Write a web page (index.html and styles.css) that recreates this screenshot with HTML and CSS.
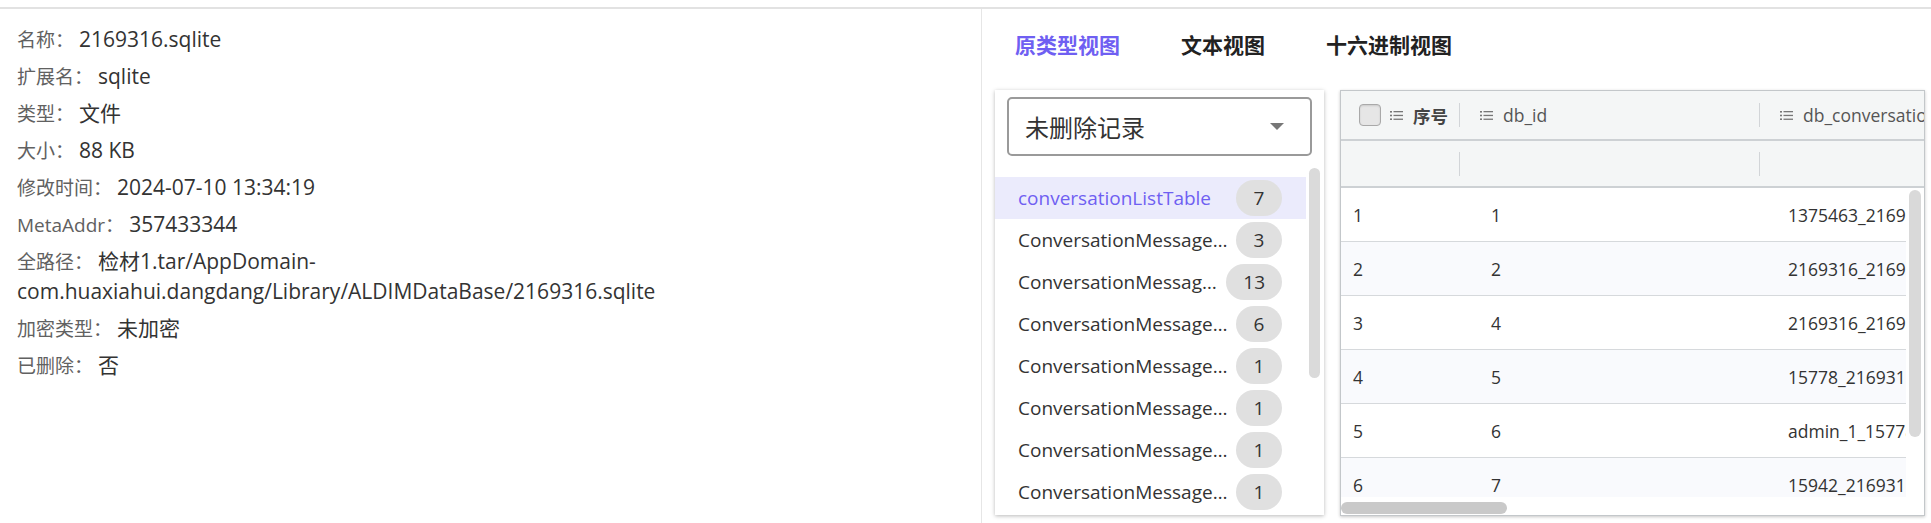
FILE: index.html
```html
<!DOCTYPE html>
<html lang="zh-CN">
<head>
<meta charset="utf-8">
<title>2169316.sqlite</title>
<link rel="stylesheet" href="styles.css">
</head>
<body>
<div class="app">
  <div class="topbar"></div>
  <div class="main">
    <section class="info">
      <div class="info-list">
        <div class="row"><span class="label">名称：</span><span class="value">2169316.sqlite</span></div>
        <div class="row"><span class="label">扩展名：</span><span class="value">sqlite</span></div>
        <div class="row"><span class="label">类型：</span><span class="value">文件</span></div>
        <div class="row"><span class="label">大小：</span><span class="value">88 KB</span></div>
        <div class="row"><span class="label">修改时间：</span><span class="value">2024-07-10 13:34:19</span></div>
        <div class="row"><span class="label">MetaAddr：</span><span class="value">357433344</span></div>
        <div class="row"><span class="label">全路径：</span><span class="value">检材1.tar/AppDomain-com.huaxiahui.dangdang/Library/ALDIMDataBase/2169316.sqlite</span></div>
        <div class="row"><span class="label">加密类型：</span><span class="value">未加密</span></div>
        <div class="row"><span class="label">已删除：</span><span class="value">否</span></div>
      </div>
    </section>
    <section class="viewer">
      <nav class="tabs">
        <span class="tab active">原类型视图</span>
        <span class="tab">文本视图</span>
        <span class="tab">十六进制视图</span>
      </nav>
      <div class="panes">
        <div class="list-card">
          <div class="select-wrap">
            <div class="select"><span>未删除记录</span><span class="caret"></span></div>
          </div>
          <div class="list">
            <ul class="items">
              <li class="item active"><span class="name">conversationListTable</span><span class="badge">7</span></li>
              <li class="item"><span class="name">ConversationMessageTable_1375463_2169316</span><span class="badge">3</span></li>
              <li class="item"><span class="name">ConversationMessageTable_2169316_2169316</span><span class="badge">13</span></li>
              <li class="item"><span class="name">ConversationMessageTable_15778_2169316</span><span class="badge">6</span></li>
              <li class="item"><span class="name">ConversationMessageTable_admin_1_15778</span><span class="badge">1</span></li>
              <li class="item"><span class="name">ConversationMessageTable_15942_2169316</span><span class="badge">1</span></li>
              <li class="item"><span class="name">ConversationMessageTable_16001_2169316</span><span class="badge">1</span></li>
              <li class="item"><span class="name">ConversationMessageTable_16203_2169316</span><span class="badge">1</span></li>
            </ul>
            <div class="vtrack"><div class="vthumb"></div></div>
          </div>
        </div>
        <div class="table-card">
          <div class="thead">
            <div class="th c1">
              <span class="checkbox"></span>
              <svg class="colicon" viewBox="0 0 13 11" width="13" height="11"><g fill="#777"><rect x="0" y="1" width="2" height="1.6"/><rect x="0" y="4.7" width="2" height="1.6"/><rect x="0" y="8.4" width="2" height="1.6"/><rect x="3.5" y="1" width="9.5" height="1.3"/><rect x="3.5" y="4.8" width="9.5" height="1.3"/><rect x="3.5" y="8.6" width="9.5" height="1.3"/></g></svg>
              <span class="th-text bold">序号</span>
            </div>
            <div class="th c2">
              <svg class="colicon" viewBox="0 0 13 11" width="13" height="11"><g fill="#777"><rect x="0" y="1" width="2" height="1.6"/><rect x="0" y="4.7" width="2" height="1.6"/><rect x="0" y="8.4" width="2" height="1.6"/><rect x="3.5" y="1" width="9.5" height="1.3"/><rect x="3.5" y="4.8" width="9.5" height="1.3"/><rect x="3.5" y="8.6" width="9.5" height="1.3"/></g></svg>
              <span class="th-text">db_id</span>
            </div>
            <div class="th c3">
              <svg class="colicon" viewBox="0 0 13 11" width="13" height="11"><g fill="#777"><rect x="0" y="1" width="2" height="1.6"/><rect x="0" y="4.7" width="2" height="1.6"/><rect x="0" y="8.4" width="2" height="1.6"/><rect x="3.5" y="1" width="9.5" height="1.3"/><rect x="3.5" y="4.8" width="9.5" height="1.3"/><rect x="3.5" y="8.6" width="9.5" height="1.3"/></g></svg>
              <span class="th-text">db_conversationId</span>
            </div>
          </div>
          <div class="tfilter">
            <div class="th c1"></div>
            <div class="th c2"></div>
            <div class="th c3"></div>
          </div>
          <div class="tbody">
            <div class="rows">
              <div class="tr"><span class="td c1">1</span><span class="td c2">1</span><span class="td c3">1375463_2169316</span></div>
              <div class="tr alt"><span class="td c1">2</span><span class="td c2">2</span><span class="td c3">2169316_2169316</span></div>
              <div class="tr"><span class="td c1">3</span><span class="td c2">4</span><span class="td c3">2169316_2169316_1</span></div>
              <div class="tr alt"><span class="td c1">4</span><span class="td c2">5</span><span class="td c3">15778_2169316</span></div>
              <div class="tr"><span class="td c1">5</span><span class="td c2">6</span><span class="td c3">admin_1_15778_2169316</span></div>
              <div class="tr alt"><span class="td c1">6</span><span class="td c2">7</span><span class="td c3">15942_2169316</span></div>
            </div>
            <div class="vtrack2"><div class="vthumb2"></div></div>
          </div>
          <div class="htrack"><div class="hthumb"></div></div>
        </div>
      </div>
    </section>
  </div>
</div>
</body>
</html>
```

FILE: styles.css
```css
* { box-sizing: border-box; }
html, body { margin: 0; padding: 0; background: #fff; }
body {
  font-family: "Open Sans", "Noto Sans CJK SC", sans-serif;
  color: #333;
  width: 1931px;
  height: 523px;
  overflow: hidden;
}
.app { display: flex; flex-direction: column; height: 523px; }
.topbar { height: 9px; border-bottom: 2px solid #e2e2e2; flex: none; }
.main { flex: 1; display: flex; min-height: 0; }

/* left info panel */
.info { width: 982px; flex: none; border-right: 1px solid #e6e6e6; padding: 11px 0 0 17px; }
.info-list { max-width: 900px; }
.row { padding: 3.5px 0; line-height: 30px; font-size: 21px; color: #333; }
.label { font-size: 19px; line-height: 1; color: #616161; }
.value { margin-left: 5px; line-height: 1; }

/* right viewer */
.viewer { flex: 1; display: flex; flex-direction: column; min-width: 0; }
.tabs { display: flex; gap: 61px; padding: 23px 0 0 33px; flex: none; }
.tab { font-size: 21px; font-weight: 700; line-height: 26px; color: #222; }
.tab.active { color: #6f5ff2; }
.panes { display: flex; gap: 16px; margin: 32px 6px 0 13px; height: 426px; }

.list-card {
  width: 329px; flex: none; height: 425px;
  background: #fff;
  box-shadow: 0 1px 4px rgba(0,0,0,0.28);
  display: flex; flex-direction: column;
}
.select-wrap { padding: 7px 12px 11px; flex: none; }
.select {
  height: 59px; border: 2px solid #9a9a9a; border-radius: 5px;
  display: flex; align-items: center; justify-content: space-between;
  padding: 0 26px 0 16px; font-size: 24px; color: #333;
}
.caret { width: 0; height: 0; border-left: 7px solid transparent; border-right: 7px solid transparent; border-top: 7px solid #777; }
.list { flex: 1; display: flex; min-height: 0; }
.items { flex: 1; min-width: 0; list-style: none; margin: 0; padding: 10px 0 0; overflow: hidden; }
.item { height: 42px; display: flex; align-items: center; padding: 0 24px 0 23px; font-size: 19px; line-height: 26px; color: #333; }
.item.active { background: #ebebfc; color: #6f5ff2; }
.name { flex: 1; min-width: 0; overflow: hidden; white-space: nowrap; text-overflow: ellipsis; }
.badge {
  flex: none; height: 36px; min-width: 46px; padding: 0 17px; border-radius: 18px;
  background: #e0e0e0; color: #333; display: flex; align-items: center; justify-content: center;
}
.vtrack { width: 18px; flex: none; padding: 1px 4px 0 3px; }
.vthumb { height: 210px; background: #dadada; border-radius: 6px; }

/* table */
.table-card {
  flex: 1; min-width: 0; height: 426px;
  border: 1px solid #c3c7ca;
  box-shadow: 0 1px 3px rgba(0,0,0,0.22);
  display: flex; flex-direction: column;
  font-size: 17.5px; color: #333; background: #fff;
  overflow: hidden;
}
.thead, .tfilter { display: flex; background: #f4f6f6; border-bottom: 2px solid #cdd1d4; flex: none; }
.thead { height: 50px; }
.tfilter { height: 47px; }
.th { display: flex; align-items: center; white-space: nowrap; overflow: hidden; color: #555; }
.th::after { content: ""; margin-left: auto; width: 1px; height: 24px; background: #d2d5d8; flex: none; }
.th.c3::after { display: none; }
.thead .th.c1 { padding-left: 18px; }
.thead .th.c2, .thead .th.c3 { padding-left: 20px; }
.c1 { width: 119px; flex: none; }
.c2 { width: 300px; flex: none; }
.c3 { flex: 1; min-width: 0; }
.checkbox {
  width: 22px; height: 22px; border: 1px solid #a9a9a9; border-radius: 4px;
  background: #e6e6e6; box-shadow: inset 0 1px 2px rgba(0,0,0,0.12); flex: none; margin-right: 9px;
}
.colicon { flex: none; margin-right: 10px; }
.th-text.bold { font-weight: 700; color: #444; }
.th.c1 .th-text { margin-right: 10px; }

.tbody { flex: 1; display: flex; min-height: 0; }
.rows { flex: 1; min-width: 0; overflow: hidden; }
.tr { height: 54px; display: flex; align-items: center; border-bottom: 1px solid #d6d9dc; }
.tr.alt { background: #f9fafd; }
.td { white-space: nowrap; overflow: hidden; }
.td.c1 { padding-left: 12px; }
.td.c2 { padding-left: 31px; }
.td.c3 { padding-left: 28px; }
.vtrack2 { width: 18px; flex: none; padding: 2px 3px 0 3px; }
.vthumb2 { height: 247px; background: #d9d9d9; border-radius: 6px; }
.htrack { height: 18px; flex: none; padding: 5px 0 0 0; }
.hthumb { width: 166px; height: 12px; background: #c9c9c9; border-radius: 6px; }
```
